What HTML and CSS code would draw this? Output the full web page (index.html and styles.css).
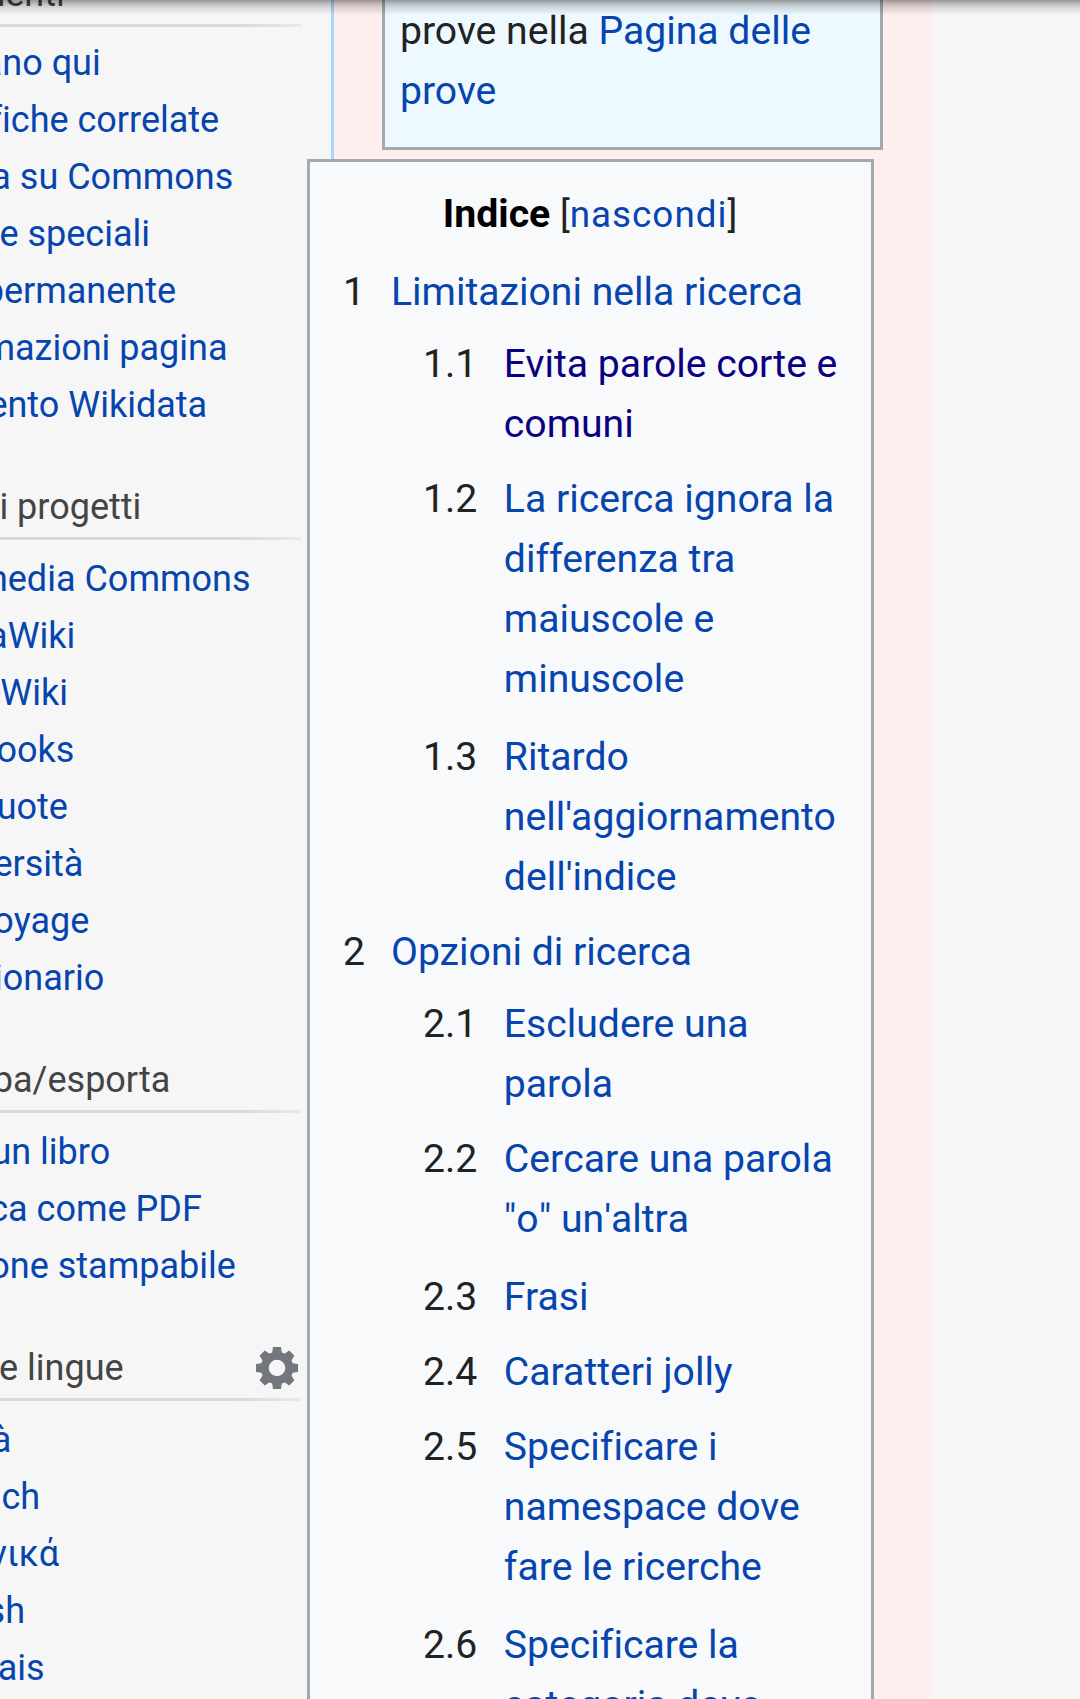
FILE: index.html
```html
<!DOCTYPE html>
<html lang="it">
<head>
<meta charset="utf-8">
<title>Aiuto:Ricerca</title>
<link rel="stylesheet" href="styles.css">
</head>
<body>
<div class="page">
  <nav class="sidebar">
    <section class="portal portal-tools">
      <h3>Strumenti</h3>
      <ul>
        <li><a>Puntano qui</a></li>
        <li><a>Modifiche correlate</a></li>
        <li><a>Carica su Commons</a></li>
        <li><a>Pagine speciali</a></li>
        <li><a>Link permanente</a></li>
        <li><a>Informazioni pagina</a></li>
        <li><a>Elemento Wikidata</a></li>
      </ul>
    </section>
    <section class="portal">
      <h3>In altri progetti</h3>
      <ul>
        <li><a>Wikimedia Commons</a></li>
        <li><a>MediaWiki</a></li>
        <li><a>Meta-Wiki</a></li>
        <li><a>Wikibooks</a></li>
        <li><a>Wikiquote</a></li>
        <li><a>Wikiversità</a></li>
        <li><a>Wikivoyage</a></li>
        <li><a>Wikizionario</a></li>
      </ul>
    </section>
    <section class="portal">
      <h3>Stampa/esporta</h3>
      <ul>
        <li><a>Crea un libro</a></li>
        <li><a>Scarica come PDF</a></li>
        <li><a>Versione stampabile</a></li>
      </ul>
    </section>
    <section class="portal">
      <h3>In altre lingue
        <svg class="gear" viewBox="-21 -21 42 42">
          <circle r="12.3" fill="none" stroke="#72777d" stroke-width="8"/>
          <path d="M-4-21H4L5-14H-5zM-4 21H4L5 14H-5zM-21-4V4L-14 5V-5zM21-4V4L14 5V-5z"/>
          <path transform="rotate(45)" d="M-3.7-21H3.7L5-14H-5zM-3.7 21H3.7L5 14H-5zM-21-3.7V3.7L-14 5V-5zM21-3.7V3.7L14 5V-5z"/>
        </svg>
      </h3>
      <ul>
        <li><a>Català</a></li>
        <li><a>Deutsch</a></li>
        <li><a>Ελληνικά</a></li>
        <li><a>English</a></li>
        <li><a>Français</a></li>
      </ul>
    </section>
  </nav>
  <main class="content">
    <div class="notice">prove nella <a>Pagina delle prove</a></div>
    <div class="toc">
      <div class="toc-title"><h2>Indice</h2> <span class="toggle">[<a>nascondi</a>]</span></div>
      <ol>
        <li><span class="num">1</span><a>Limitazioni nella ricerca</a>
          <ol>
            <li><span class="num">1.1</span><a class="active">Evita parole corte e comuni</a></li>
            <li><span class="num">1.2</span><a>La ricerca ignora la differenza tra maiuscole e minuscole</a></li>
            <li class="spaced"><span class="num">1.3</span><a>Ritardo nell'aggiornamento dell'indice</a></li>
          </ol>
        </li>
        <li><span class="num">2</span><a>Opzioni di ricerca</a>
          <ol>
            <li><span class="num">2.1</span><a>Escludere una parola</a></li>
            <li><span class="num">2.2</span><a class="unkerned">Cercare una parola "o" un'altra</a></li>
            <li class="spaced"><span class="num">2.3</span><a>Frasi</a></li>
            <li><span class="num">2.4</span><a>Caratteri jolly</a></li>
            <li><span class="num">2.5</span><a>Specificare i namespace dove fare le ricerche</a></li>
            <li class="spaced"><span class="num">2.6</span><a>Specificare la categoria dove</a></li>
          </ol>
        </li>
      </ol>
    </div>
  </main>
  <div class="top-shadow"></div>
</div>
</body>
</html>
```
FILE: styles.css
```css
* { box-sizing: border-box; }
body {
  margin: 0;
  background: #f6f6f6;
  color: #222;
  font-family: Roboto, "Liberation Sans", sans-serif;
  font-variant-ligatures: none;
}
a { color: #0645ad; text-decoration: none; }
ul, ol { list-style: none; margin: 0; padding: 0; }

.page {
  position: relative;
  display: flex;
  height: 1699px;
  overflow: hidden;
}

/* Sidebar, scrolled partly off the left edge */
.sidebar {
  flex: none;
  width: 422.5px;
  margin-left: -91.5px;
  padding-right: 30px;
  font-size: 36px;
  line-height: 57px;
  white-space: nowrap;
}
.portal h3 {
  display: flex;
  justify-content: space-between;
  align-items: flex-end;
  height: 107px;
  margin: 0 0 11px;
  padding-bottom: 1px;
  font-size: 36px;
  font-weight: 400;
  line-height: 57px;
  color: #444;
  border-bottom: 3px solid;
  border-image: linear-gradient(to right, #d8d8d8 83%, #e9e9e9) 1;
}
.portal ul { margin-bottom: -1px; }
.portal-tools { margin-top: -80px; }
.portal-tools h3 { margin-bottom: 8px; }
.gear {
  width: 42px;
  height: 42px;
  margin: 0 3px 8px 0;
  fill: #72777d;
}

.content {
  flex: none;
  width: 600px;
  background: #ffeeee;
  border-left: 3px solid #a7d7f9;
  font-size: 39.15px;
  line-height: 60px;
}
.notice {
  width: 501px;
  height: 150px;
  margin-left: 48px;
  padding: 1px 15px 0;
  background: #edf9ff;
  border: 3px solid #a2a9b1;
  border-top: 0;
}
.toc {
  position: relative;
  width: 567px;
  height: 1600px;
  margin: 9px 0 0 -27px;
  padding: 22px 32px 0 33px;
  background: #f8f9fa;
  border: 3px solid #a2a9b1;
}
.toc-title { height: 60px; margin: 0 2px 18px 0; text-align: center; }
.toc-title h2 {
  display: inline;
  font-size: 39.2px;
  font-weight: 700;
  color: #000;
}
.toggle { font-size: 36.85px; line-height: 1; }
.toggle a { letter-spacing: 1px; }
.toc li {
  display: grid;
  grid-template-columns: auto 1fr;
  column-gap: 26px;
  margin-top: 15px;
}
.toc li li { margin-top: 15px; column-gap: 26.5px; }
.toc li ol { grid-column: 1 / -1; margin-left: 80px; }
.toc li ol li:first-child { margin-top: 12px; }
.toc li li.spaced { margin-top: 18px; }
.toc a.active { color: #0b0080; }
.toc a.unkerned { font-kerning: none; }

/* Shadow cast by the browser toolbar */
.top-shadow {
  position: absolute;
  top: 0;
  left: 0;
  right: 0;
  height: 15px;
  background: linear-gradient(rgba(0,0,0,.38), rgba(0,0,0,.16) 40%, rgba(0,0,0,0));
}
```
